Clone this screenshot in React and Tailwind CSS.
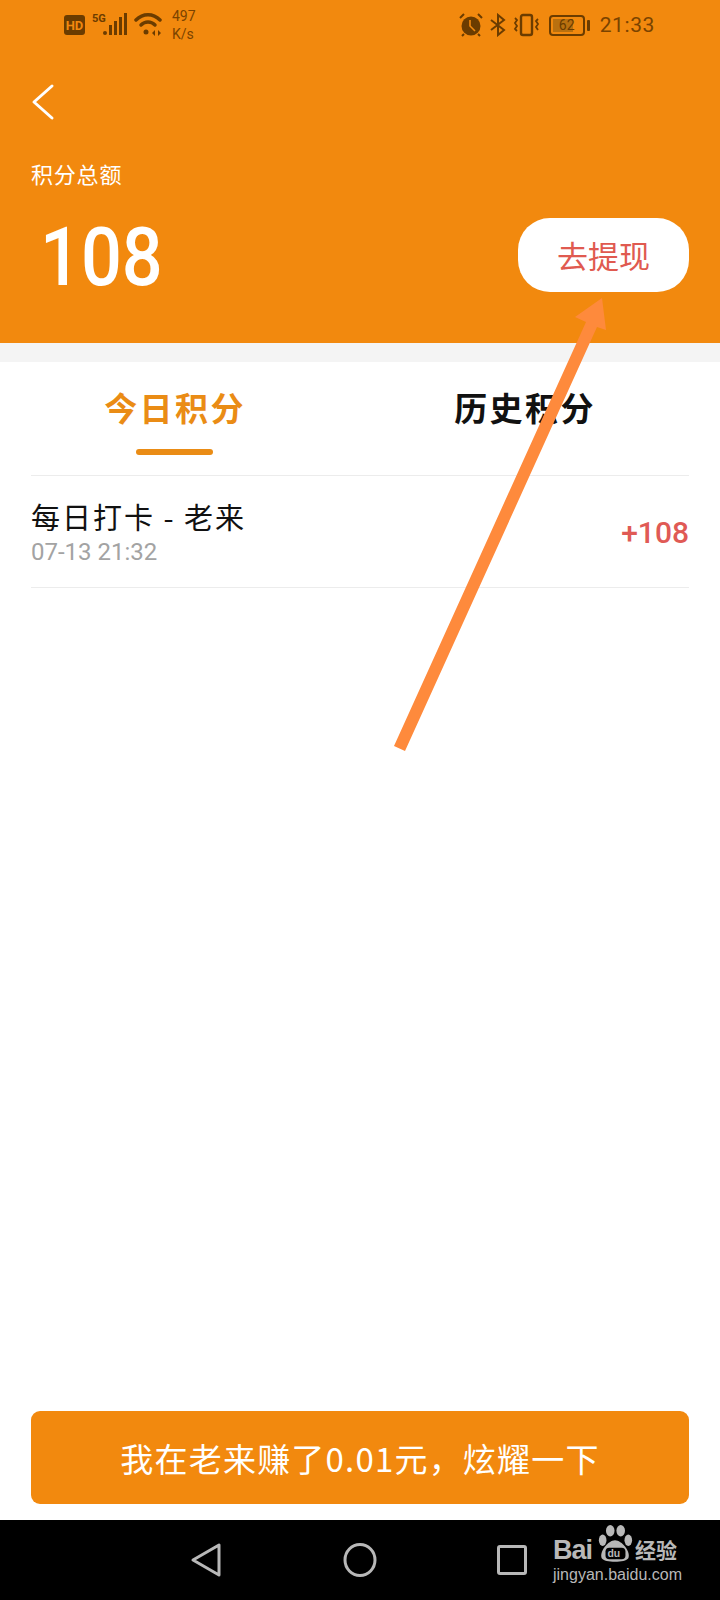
import React from "react";

const CJK = "font-['Noto_Sans_CJK_SC','Noto_Sans_CJK_TC',serif]";
const NUM = "font-['Roboto',sans-serif]";

const StatusBar = () => (
  <div className="flex h-[50px] items-center pl-[64px] pr-[65px] text-[#7a4300]">
    <div className="flex h-[20px] w-[21px] items-center justify-center rounded-[3px] bg-[#6b3c00] text-[13px] font-bold leading-none text-[#f2890e] font-['Roboto',sans-serif]">
      HD
    </div>
    <svg className="ml-[7px] mt-[-2px]" width="36" height="24" viewBox="0 0 36 24" fill="#6b3c00">
      <text x="0" y="10" fontSize="11" fontWeight="700" fontFamily="Roboto">5G</text>
      <circle cx="13" cy="21" r="2" />
      <rect x="17" y="13" width="3" height="10" />
      <rect x="22" y="9" width="3" height="14" />
      <rect x="27" y="5" width="3" height="18" />
      <rect x="32" y="1" width="3" height="22" />
    </svg>
    <svg className="ml-[6px]" width="28" height="24" viewBox="0 0 28 24" fill="none" stroke="#6b3c00" strokeWidth="3.5" strokeLinecap="round">
      <path d="M2 7 C9 0 19 0 26 7" />
      <path d="M7 12 C11 8 17 8 21 12" />
      <circle cx="12" cy="19" r="2.5" fill="#6b3c00" stroke="none" />
      <path d="M18 20 l3 -3 v6 z M24 17 l3 3 l-3 3 z" fill="#6b3c00" stroke="none" />
    </svg>
    <div className={`ml-[10px] text-[14px] leading-[18px] ${NUM}`}>
      <div>497</div>
      <div>K/s</div>
    </div>
    <div className="flex-1" />
    <svg width="24" height="24" viewBox="0 0 24 24" fill="#6b3c00">
      <circle cx="12" cy="13" r="9.5" />
      <path d="M1 5 L5 1 M23 5 L19 1 M5 21 L3 23 M19 21 L21 23" stroke="#6b3c00" strokeWidth="2" />
      <path d="M11 7 V13 L16 18" stroke="#f2890e" strokeWidth="1.6" fill="none" />
    </svg>
    <svg className="ml-[7px]" width="16" height="24" viewBox="0 0 16 24" fill="none" stroke="#6b3c00" strokeWidth="2">
      <path d="M1 7 L14 17 L8 22 V2 L14 7 L1 17" />
    </svg>
    <svg className="ml-[7px]" width="27" height="24" viewBox="0 0 27 24" fill="none" stroke="#6b3c00" strokeWidth="2.4">
      <rect x="8" y="2" width="11" height="20" rx="2" />
      <path d="M2 5 l2 2 l-2 3 l2 3 l-2 3 l2 2 M25 6 l-2 2 l2 3 l-2 3 l2 3" strokeWidth="1.8" />
    </svg>
    <div className="relative ml-[9px] flex h-[21px] w-[36px] items-center rounded-[4px] border-2 border-[#6b3c00]">
      <div className="ml-[2px] h-[13px] w-[20px] bg-[#b9700f]" />
      <span className={`absolute inset-0 text-center text-[14px] leading-[17px] text-[#6b3c00] ${NUM}`}>62</span>
    </div>
    <div className="ml-[2px] h-[11px] w-[3px] rounded-[1px] bg-[#6b3c00]" />
    <div className={`ml-[10px] text-[21px] leading-none tracking-[0.6px] ${NUM}`}>21:33</div>
  </div>
);

const Header = () => (
  <div className="h-[343px] bg-[#f2890e] text-white">
    <StatusBar />
    <svg className="ml-[31px] mt-[33px]" width="24" height="38" viewBox="0 0 24 38" fill="none" stroke="white" strokeWidth="3" strokeLinecap="round" strokeLinejoin="round">
      <path d="M21 3 L3 19 L21 35" />
    </svg>
    <div className={`ml-[31px] mt-[37px] text-[22px] leading-[30px] tracking-[0.8px] ${CJK}`}>积分总额</div>
    <div className="mt-[30px] flex items-start justify-between pl-[40px] pr-[31px]">
      <div className={`origin-left scale-y-[1.12] text-[72px] font-medium leading-[80px] ${NUM}`}>108</div>
      <button className={`h-[74px] w-[171px] rounded-[32px] bg-white text-[31px] text-[#e05a50] ${CJK}`}>去提现</button>
    </div>
  </div>
);

const Tabs = () => (
  <div className="flex h-[113px] pr-[20px]">
    <div className="relative flex-1 pt-[23px] text-center">
      <span className={`text-[33px] font-bold leading-[44px] tracking-[2.4px] text-[#ea8c15] ${CJK}`}>今日积分</span>
      <div className="absolute bottom-[20px] left-[136px] h-[6px] w-[77px] rounded-[3px] bg-[#ea8c15]" />
    </div>
    <div className="flex-1 pt-[23px] text-center">
      <span className={`text-[33px] font-bold leading-[44px] tracking-[2.4px] text-[#111] ${CJK}`}>历史积分</span>
    </div>
  </div>
);

const Row = () => (
  <div className="mx-[31px] flex h-[113px] items-center justify-between border-y border-[#ececec]">
    <div>
      <div className={`text-[29px] leading-[38px] tracking-[2px] text-[#111] ${CJK}`}>每日打卡 - 老来</div>
      <div className={`mt-[3px] text-[24px] leading-[28px] text-[#a3a3a3] ${NUM}`}>07-13 21:32</div>
    </div>
    <div className={`mt-[2px] text-[30px] font-medium text-[#e05a55] ${NUM}`}>+108</div>
  </div>
);

const BaiduMark = () => (
  <div className="ml-[26px] mt-[3px] flex w-[128px] flex-col text-[#b8b8b8]">
    <div className="flex h-[40px] items-end">
      <span className="text-[27px] font-bold leading-[26px] tracking-[-1px] font-['Liberation_Sans',sans-serif]">Bai</span>
      <svg className="ml-[4px]" width="38" height="38" viewBox="0 0 38 40" fill="#b8b8b8">
        <ellipse cx="6" cy="16" rx="4" ry="6" />
        <ellipse cx="14" cy="6" rx="4.5" ry="6" />
        <ellipse cx="25" cy="6" rx="4.5" ry="6" />
        <ellipse cx="33" cy="16" rx="4" ry="6" />
        <path d="M19 16 C26 16 36 28 33 35 C30 40 8 40 5 35 C2 28 12 16 19 16 Z" />
        <rect x="9" y="24" width="21" height="12" rx="4" fill="black" />
        <text x="11" y="34" fontSize="11" fontWeight="700" fill="#b8b8b8" fontFamily="Liberation Sans">du</text>
      </svg>
      <span className={`ml-[1px] text-[21px] font-bold leading-[27px] ${CJK}`}>经验</span>
    </div>
    <div className="mt-[2px] text-[16px] leading-[20px] font-['Liberation_Sans',sans-serif]">jingyan.baidu.com</div>
  </div>
);

const NavBar = () => (
  <div className="flex h-[80px] items-start bg-black">
    <svg className="ml-[190px] mt-[22px]" width="32" height="36" viewBox="0 0 32 36" fill="none" stroke="#b8b8b8" strokeWidth="3" strokeLinejoin="round">
      <path d="M29 3 V33 L3 18 Z" />
    </svg>
    <svg className="ml-[121px] mt-[23px]" width="34" height="34" viewBox="0 0 34 34" fill="none" stroke="#b8b8b8" strokeWidth="3">
      <ellipse cx="17" cy="17" rx="15" ry="15.5" />
    </svg>
    <div className="ml-[120px] mt-[25px] h-[30px] w-[30px] rounded-[3px] border-[3px] border-[#b8b8b8]" />
    <BaiduMark />
  </div>
);

export default function App() {
  return (
    <div className="relative flex h-[1600px] w-[720px] flex-col overflow-hidden bg-white">
      <Header />
      <div className="h-[19px] bg-[#f4f4f4]" />
      <Tabs />
      <Row />
      <div className="flex-1" />
      <div className={`mx-[31px] mb-[16px] flex h-[93px] items-center justify-center rounded-[9px] bg-[#f2890e] pt-[2px] text-[33px] tracking-[1.2px] text-white ${CJK}`}>
        我在老来赚了0.01元，炫耀一下
      </div>
      <NavBar />
      {/* annotation arrow drawn over the screenshot */}
      <svg className="absolute left-0 top-0" width="720" height="800" viewBox="0 0 720 800" fill="#fe8a3c">
        <polygon points="394,746 586,322 575,317 602,298 606,330 597,327 405,751" />
      </svg>
    </div>
  );
}
